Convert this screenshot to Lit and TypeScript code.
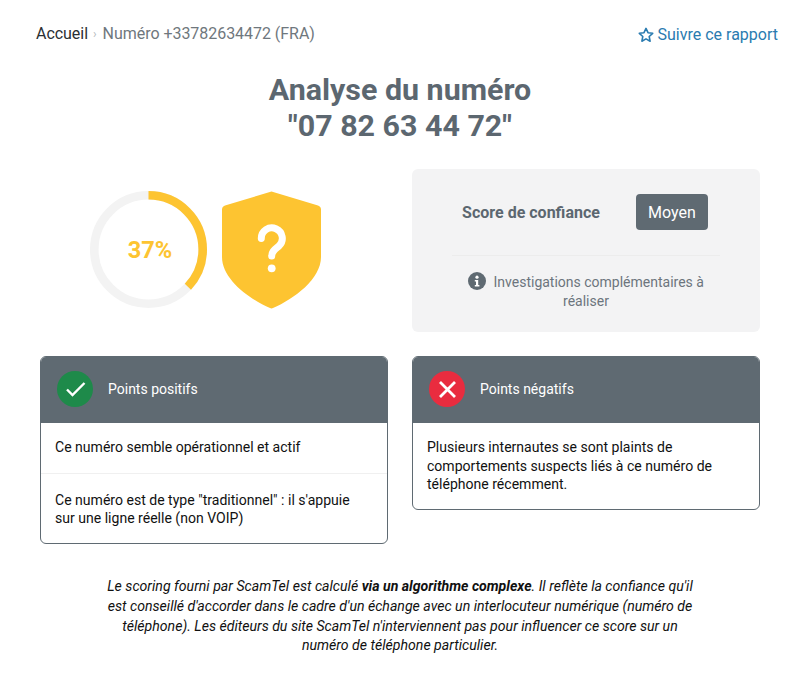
import { LitElement, html, css } from "lit";
import { customElement } from "lit/decorators.js";

@customElement("app-root")
export class AppRoot extends LitElement {
  static styles = css`
    :host { display: block; font-family: Roboto, "Liberation Sans", sans-serif; background: #fff; min-height: 699px; color: #111; }
    * { box-sizing: border-box; }
    .top { display: flex; justify-content: space-between; align-items: center; padding: 25px 22px 0 36px; height: 44px; font-size: 16px; line-height: 20px; }
    .crumbs { color: #6f777d; display: flex; align-items: center; letter-spacing: -0.04px; padding-bottom: 2px; }
    .crumbs .home { color: #2a2f33; }
    .crumbs .sep { color: #b5b9bc; font-size: 12px; margin: 0 6px 0 5px; }
    .follow { color: #2a7bb0; display: flex; align-items: center; gap: 4px; }
    .follow svg { display: block; }
    h1 { margin: 0; padding-top: 28px; text-align: center; font-size: 30.4px; line-height: 36px; font-weight: 700; color: #5c6770; }
    .grid { display: grid; grid-template-columns: 348px 348px; column-gap: 24px; padding: 0 40px; }
    .first { margin-top: 25px; }
    .score { display: flex; align-items: center; padding: 0 0 2px 50px; gap: 15px; }
    .ring { position: relative; width: 117px; height: 117px; }
    .ring svg { display: block; }
    .ring span { position: absolute; inset: 0; display: flex; align-items: center; justify-content: center; padding-left: 3px; font-size: 23.6px; font-weight: 700; color: #fdc431; }
    .shield { display: block; }
    .box { background: #f3f3f4; border-radius: 6px; height: 163px; padding: 25px 40px 0; }
    .rate { display: flex; align-items: center; justify-content: center; gap: 36px; padding: 0 2px 25px 0; border-bottom: 1px solid #ececec; height: 62px; }
    .rate b { font-size: 16px; font-weight: 700; color: #5c6770; }
    .rate span { background: #5f6a72; color: #fff; font-size: 16px; width: 72px; height: 36px; border-radius: 4px; display: flex; align-items: center; justify-content: center; }
    .note { margin: 16px 0 0; text-align: center; font-size: 14px; line-height: 19px; color: #6c757d; }
    .note svg { vertical-align: -3px; margin-right: 4px; }
    .row2 { margin-top: 24px; align-items: start; }
    .card { border: 1px solid #5f6a72; border-radius: 6px; overflow: hidden; }
    .head { background: #5f6a72; color: #fff; height: 66px; display: flex; align-items: center; gap: 15px; padding: 0 0 2px 16px; font-size: 14px; }
    .head svg { display: block; }
    .item { padding: 15px 14px; font-size: 14.06px; line-height: 18.62px; color: #111; }
    .item.lead { padding-bottom: 16px; }
    .item.tail { border-top: 1px solid #f0f0f0; padding: 17px 20px 15px 14px; }
    .foot { margin: 33.5px auto 0; width: 600px; text-align: center; font-style: italic; font-size: 14.12px; line-height: 19.6px; color: #111; }
  `;

  render() {
    return html`
      <div class="top">
        <div class="crumbs"><span class="home">Accueil</span><span class="sep">›</span><span>Numéro +33782634472 (FRA)</span></div>
        <div class="follow">
          <svg width="16" height="16" viewBox="0 0 16 16" fill="none" stroke="#2a7bb0" stroke-width="1.6" stroke-linejoin="round"><path d="M8 1.4l2 4.3 4.7.6-3.5 3.2.9 4.7L8 11.9l-4.1 2.3.9-4.7L1.3 6.3 6 5.7z"/></svg>
          <span>Suivre ce rapport</span>
        </div>
      </div>
      <h1>Analyse du numéro<br />"07 82 63 44 72"</h1>
      <div class="grid first">
        <div class="score">
          <div class="ring">
            <svg width="117" height="117" viewBox="0 0 117 117">
              <circle cx="58.5" cy="58.5" r="54.2" fill="none" stroke="#f3f3f3" stroke-width="8.6"/>
              <circle cx="58.5" cy="58.5" r="54.2" fill="none" stroke="#fdc431" stroke-width="8.6" stroke-dasharray="126 341" transform="rotate(-90 58.5 58.5)"/>
            </svg>
            <span>37%</span>
          </div>
          <svg class="shield" width="99" height="118" viewBox="0 0 99 118">
            <path d="M49.5 0.5 L96 14.5 Q99 15.5 99 18.5 V66 C99 88 72 108 51 117 Q49.5 117.8 48 117 C27 108 0 88 0 66 V18.5 Q0 15.5 3 14.5 Z" fill="#fdc431"/>
            <path d="M39.3 47.5 A10.5 10.5 0 1 1 57 55 C53 58.5 49.7 60 49.7 65" fill="none" stroke="#fff" stroke-width="7" stroke-linecap="round"/>
            <circle cx="49.7" cy="77.3" r="3.9" fill="#fff"/>
          </svg>
        </div>
        <div class="box">
          <div class="rate"><b>Score de confiance</b><span>Moyen</span></div>
          <p class="note">
            <svg width="18" height="18" viewBox="0 0 18 18"><circle cx="9" cy="9" r="9" fill="#5f6a72"/><circle cx="9" cy="5.2" r="1.6" fill="#fff"/><path d="M6.8 8h3.4v5h1.2v1.5H6.8V13H8V9.5H6.8z" fill="#fff"/></svg>
            Investigations complémentaires à réaliser
          </p>
        </div>
      </div>
      <div class="grid row2">
        <div class="card">
          <div class="head">
            <svg width="36" height="36" viewBox="0 0 36 36"><circle cx="18" cy="18" r="18" fill="#1e8a4a"/><path d="M10 18.5l5.5 5.5L27.5 12" fill="none" stroke="#fff" stroke-width="2.4"/></svg>
            <span>Points positifs</span>
          </div>
          <div class="item lead">Ce numéro semble opérationnel et actif</div>
          <div class="item tail">Ce numéro est de type "traditionnel" : il s'appuie sur une ligne réelle (non VOIP)</div>
        </div>
        <div class="card">
          <div class="head">
            <svg width="36" height="36" viewBox="0 0 36 36"><circle cx="18" cy="18" r="18" fill="#e92c3f"/><path d="M11 11l15 15M26 11L11 26" fill="none" stroke="#fff" stroke-width="2.8"/></svg>
            <span>Points négatifs</span>
          </div>
          <div class="item">Plusieurs internautes se sont plaints de comportements suspects liés à ce numéro de téléphone récemment.</div>
        </div>
      </div>
      <p class="foot">Le scoring fourni par ScamTel est calculé <b>via un algorithme complexe</b>. Il reflète la confiance qu'il est conseillé d'accorder dans le cadre d'un échange avec un interlocuteur numérique (numéro de téléphone). Les éditeurs du site ScamTel n'interviennent pas pour influencer ce score sur un numéro de téléphone particulier.</p>
    `;
  }
}
